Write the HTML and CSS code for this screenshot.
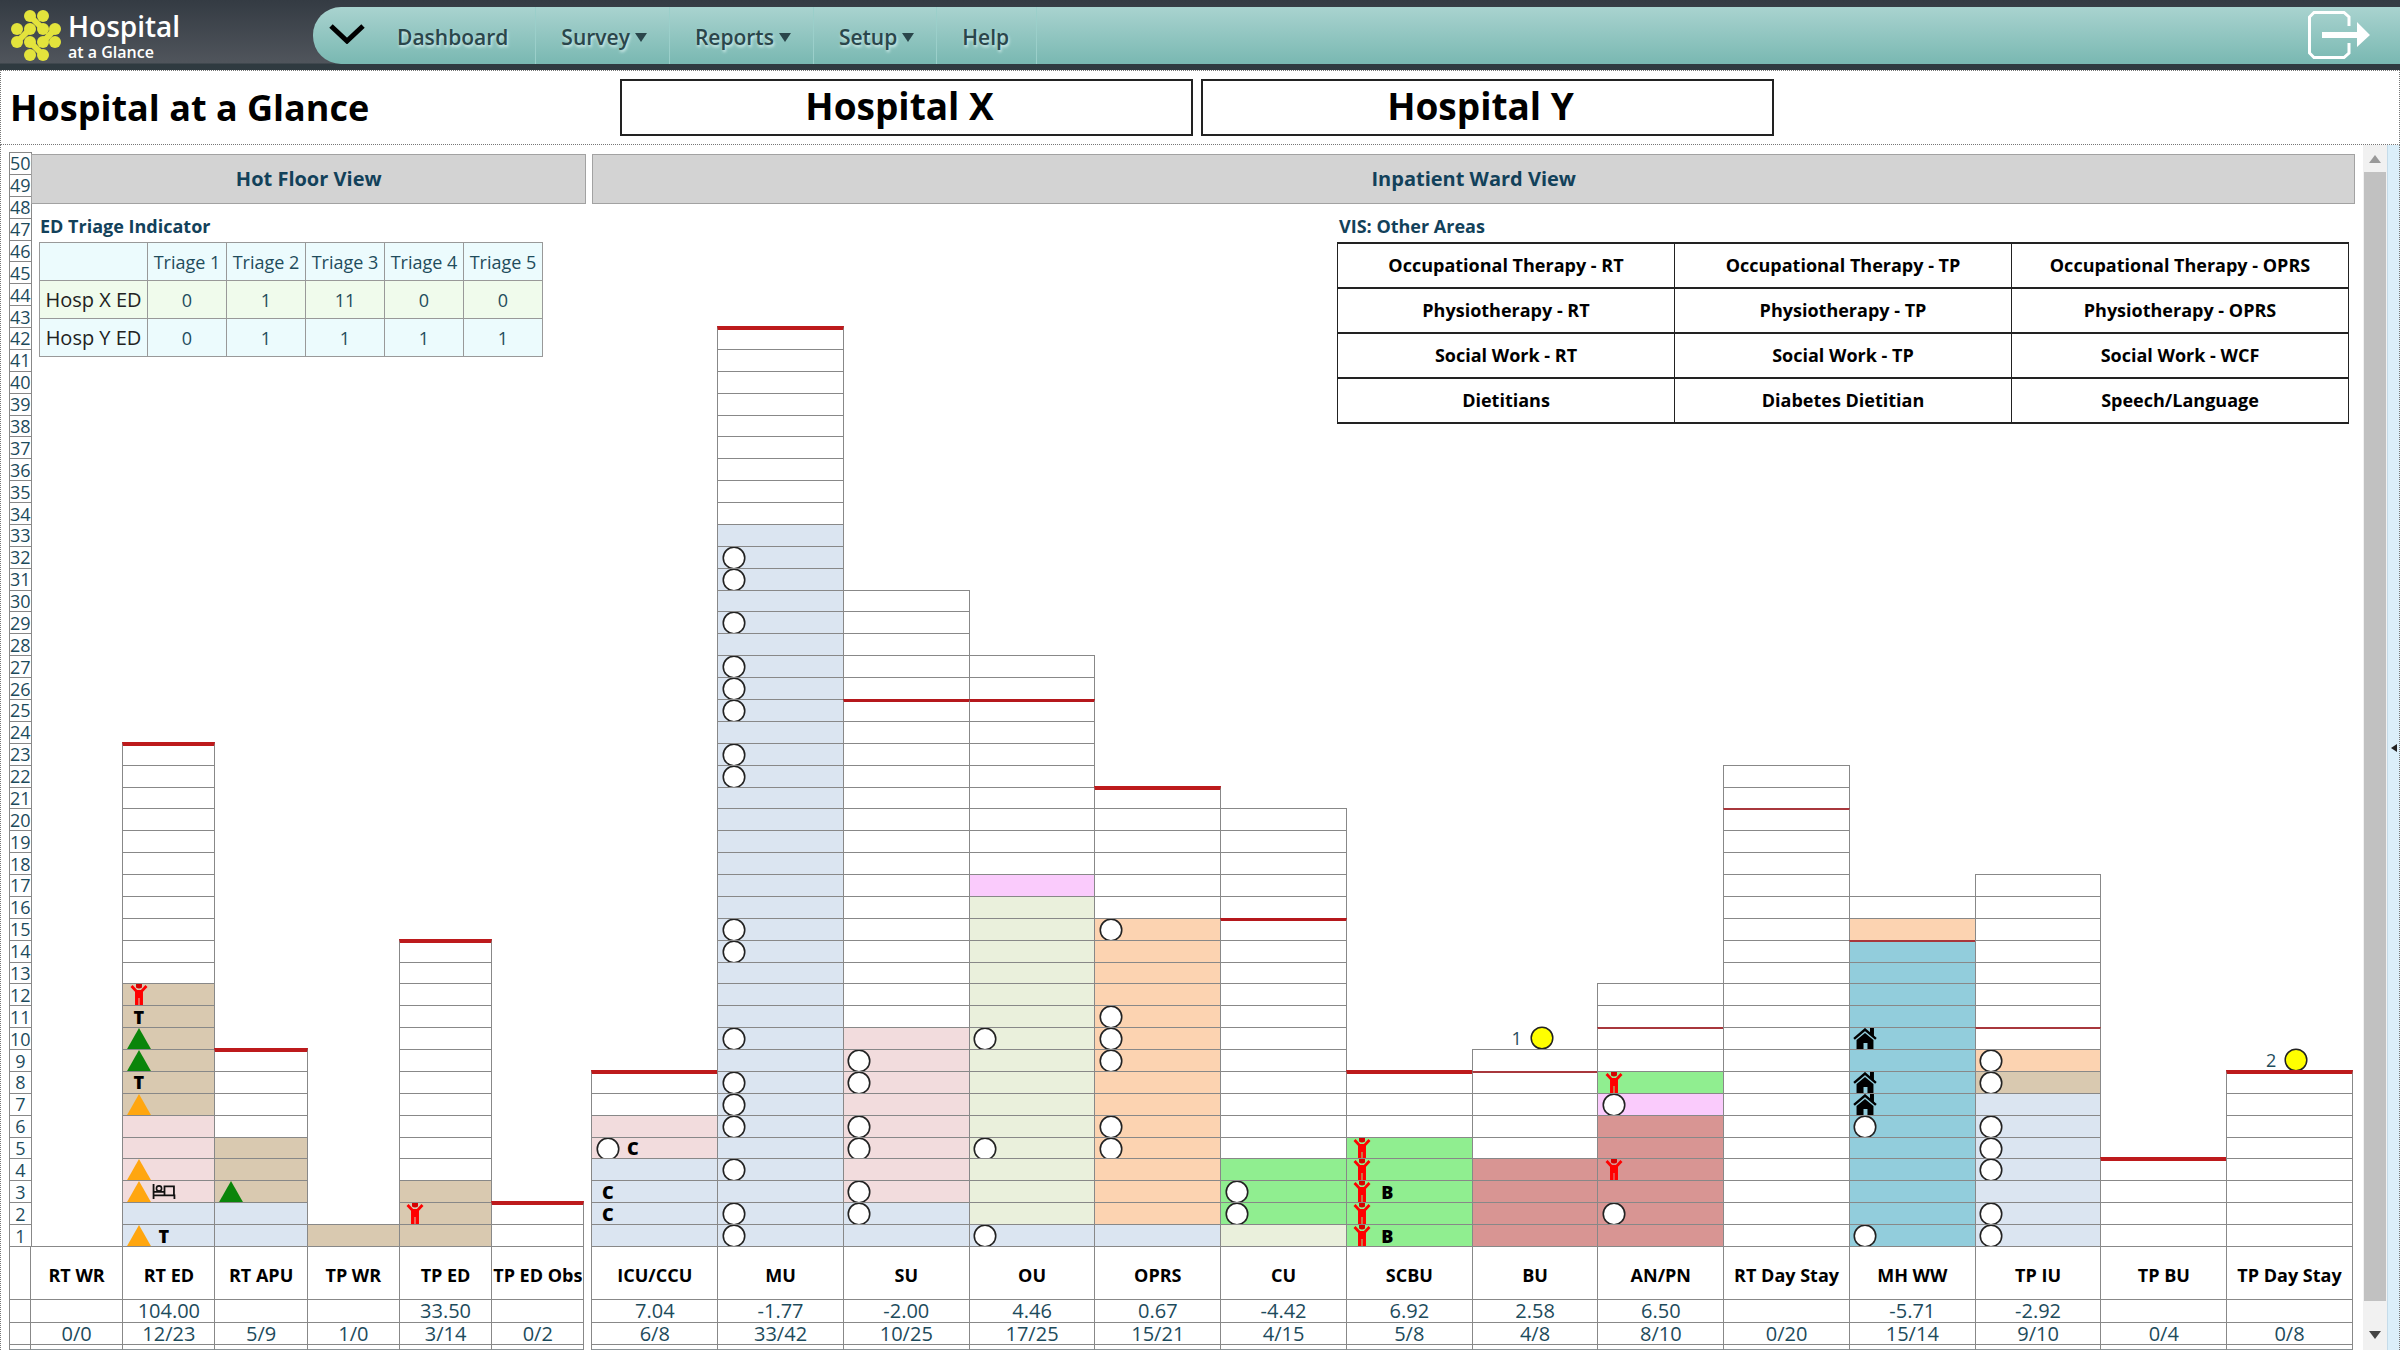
FILE: index.html
```html
<!DOCTYPE html>
<html lang="en">
<head>
    <meta charset="UTF-8">
    <title>Hospital at a Glance</title>
    <link rel="stylesheet" href="styles.css">
</head>
<body>

    <!-- icons used in the bed cells -->
    <svg class="defs" aria-hidden="true">
        <symbol id="circle" viewBox="0 0 24 21"><circle cx="12" cy="11" r="10.8" fill="#fff" stroke="#222" stroke-width="1.6"/></symbol>
        <symbol id="yellow" viewBox="0 0 24 24"><circle cx="12" cy="12" r="10.8" fill="#ff0" stroke="#222" stroke-width="1.5"/></symbol>
        <symbol id="green" viewBox="0 0 24 21"><path d="M12 0L24 21H0z" fill="#0a850a"/></symbol>
        <symbol id="amber" viewBox="0 0 24 21"><path d="M12 0L24 21H0z" fill="#ffa60f"/></symbol>
        <symbol id="person" viewBox="0 0 24 21">
            <path d="M4.500 2L9.500 7.500H14.500L19.500 2" fill="none" stroke="#f00" stroke-width="2.800"/>
            <path d="M9 0h6v3.500q-3 2-6 0z" fill="#d60000"/>
            <path d="M8 6h8v15h-3.500v-7h-1v7H8z" fill="#f00"/>
        </symbol>
        <symbol id="house" viewBox="0 0 24 21">
            <path d="M17 0h4v9l-4-3z"/>
            <path d="M1 11L12 1.500L23 11" fill="none" stroke="#000" stroke-width="2.400"/>
            <path d="M3.500 12L12 5l8.500 7v9h-6v-6h-4v6h-7z"/>
        </symbol>
        <symbol id="bed" viewBox="0 0 24 21">
            <path d="M1.500 3v15M1.500 14.500h21V18M22 14V5.500H12.500V14M2 11h10" fill="none" stroke="#111" stroke-width="1.800"/>
            <circle cx="7" cy="7.500" r="2.600" fill="none" stroke="#111" stroke-width="1.600"/>
        </symbol>
    </svg>

    <header class="topbar">
        <a class="logo" href="#">
            <svg viewBox="0 0 50 52" width="50" height="52" aria-hidden="true">
                <g fill="#e3e33c">
                    <circle cx="19" cy="6" r="6"/><circle cx="32" cy="6" r="6"/>
                    <circle cx="6" cy="19" r="6"/><circle cx="19" cy="19" r="6"/><circle cx="32" cy="19" r="6"/><circle cx="44" cy="19" r="6"/>
                    <circle cx="6" cy="32" r="6"/><circle cx="19" cy="32" r="6"/><circle cx="32" cy="32" r="6"/><circle cx="44" cy="32" r="6"/>
                    <circle cx="19" cy="45" r="6"/><circle cx="32" cy="45" r="6"/>
                </g>
                <path d="M19 6L32 19M19 19L6 32M44 19L32 32M19 32L32 45" stroke="#e3e33c" stroke-width="6"/>
            </svg>
            <span class="logo-text"><span class="logo-name">Hospital</span><span class="logo-sub">at a Glance</span></span>
        </a>
        <nav class="menu">
            <button class="toggle" aria-label="Collapse menu">
                <svg viewBox="0 0 36 20" width="36" height="20"><path d="M2 2L18 17L34 2" fill="none" stroke="#000" stroke-width="5"/></svg>
            </button>
            <a href="#">Dashboard</a>
            <a href="#">Survey<span class="arrow"></span></a>
            <a href="#">Reports<span class="arrow"></span></a>
            <a href="#">Setup<span class="arrow"></span></a>
            <a href="#">Help</a>
            <button class="exit" aria-label="Log out">
                <svg viewBox="0 0 62 48" width="62" height="48">
                    <path d="M41 15V6L36 1.500H6L1.500 6V42L6 46.500H36L41 42V32" fill="none" stroke="#fff" stroke-width="3"/>
                    <path d="M14 21H49V11L62 24L49 36V27H14z" fill="#fff"/>
                </svg>
            </button>
        </nav>
    </header>

    <div class="titlebar">
        <h1>Hospital at a Glance</h1>
        <button class="site">Hospital X</button>
        <button class="site">Hospital Y</button>
    </div>

    <main>
        <div class="panel">
            <div class="scale" id="scale"></div>

            <section class="view">
                <div class="view-top">
                    <h2>Hot Floor View</h2>
                    <h3>ED Triage Indicator</h3>
                    <table class="triage">
                        <tr><th></th><th>Triage 1</th><th>Triage 2</th><th>Triage 3</th><th>Triage 4</th><th>Triage 5</th></tr>
                        <tr class="odd"><td class="site-name">Hosp X ED</td><td>0</td><td>1</td><td>11</td><td>0</td><td>0</td></tr>
                        <tr><td class="site-name">Hosp Y ED</td><td>0</td><td>1</td><td>1</td><td>1</td><td>1</td></tr>
                    </table>
                </div>
                <div class="wards" id="hot-floor"></div>
            </section>

            <section class="view">
                <div class="view-top">
                    <h2>Inpatient Ward View</h2>
                    <div class="areas">
                        <h3>VIS: Other Areas</h3>
                        <table>
                            <tr><td>Occupational Therapy - RT</td><td>Occupational Therapy - TP</td><td>Occupational Therapy - OPRS</td></tr>
                            <tr><td>Physiotherapy - RT</td><td>Physiotherapy - TP</td><td>Physiotherapy - OPRS</td></tr>
                            <tr><td>Social Work - RT</td><td>Social Work - TP</td><td>Social Work - WCF</td></tr>
                            <tr><td>Dietitians</td><td>Diabetes Dietitian</td><td>Speech/Language</td></tr>
                        </table>
                    </div>
                </div>
                <div class="wards" id="inpatient"></div>
            </section>
        </div>

        <div class="scrollbar"><span class="up"></span><span class="thumb"></span><span class="down"></span></div>
        <div class="splitter"><span></span></div>
    </main>

    <script src="script.js"></script>
</body>
</html>
```

FILE: styles.css
```css
* {
    box-sizing: border-box;
}

body {
    margin: 0;
    height: 100vh;
    display: flex;
    flex-direction: column;
    overflow: hidden;
    background: #fff;
    color: #000;
    font-family: "Open Sans", "Noto Sans", sans-serif;
    font-size: 18px;
}

h1, h2, h3 {
    margin: 0;
}

button {
    font-family: inherit;
    background: none;
    border: none;
    padding: 0;
    cursor: pointer;
}

.defs {
    display: none;
}

/* Top bar */
.topbar {
    display: flex;
    height: 70px;
    padding: 7px 0 6px 11px;
    background: linear-gradient(#343b43, #50555c 63px, #2f3a40 64px);
}

.logo {
    display: flex;
    align-items: center;
    gap: 7px;
    width: 302px;
    color: #fff;
    text-decoration: none;
}

.logo-text {
    display: flex;
    flex-direction: column;
    font-weight: 600;
}

.logo-name {
    font-size: 28px;
    line-height: 32px;
}

.logo-sub {
    font-size: 16px;
    line-height: 20px;
}

.menu {
    display: flex;
    flex: 1;
    align-items: stretch;
    border-radius: 28px 0 0 28px;
    background: linear-gradient(#a9d3cf, #79b8b2);
}

.toggle {
    padding: 0 7px 0 16px;
}

.menu a {
    display: flex;
    align-items: center;
    gap: 5px;
    padding: 3px 27px 0 25px;
    border-right: 1px solid #9bcfca;
    color: #2a464b;
    font-size: 21px;
    font-weight: 600;
    text-decoration: none;
    text-shadow: 1px 2px 3px #d8f0ee;
}

.arrow {
    border: 6px solid transparent;
    border-top: 9px solid #2a464b;
    border-bottom: 0;
}

.menu a:has(.arrow) {
    padding-right: 22px;
}

.exit {
    margin-left: auto;
    margin-right: 30px;
    padding-top: 2px;
}

/* Title row */
.titlebar {
    display: flex;
    align-items: center;
    height: 75px;
    padding: 0 10px 0 9px;
    gap: 8px;
    border: 1px dotted #777;
}

.titlebar h1 {
    width: 602px;
    font-size: 36px;
    font-weight: 700;
}

.site {
    width: 573px;
    height: 57px;
    padding: 0 14px 4px 0;
    border: 2px solid #222;
    background: #fff;
    font-size: 37px;
    line-height: 40px;
    font-weight: 700;
}

/* Chart */
main {
    flex: 1;
    display: flex;
    min-height: 0;
    border-left: 1px dotted #777;
}

.panel {
    flex: 1;
    display: grid;
    grid-template: minmax(0, 1fr) / 22px 239fr 761fr;
    padding: 7px 8px 0 8px;
}

.view {
    display: grid;
    grid-template: minmax(0, 1fr) / 1fr;
}

.view + .view {
    margin-left: 6px;
}

.view-top, .wards {
    grid-area: 1 / 1;
}

.view-top {
    padding-top: 2px;
    color: #12415a;
}

h2 {
    height: 50px;
    border: 1px solid #a2a2a2;
    background: #d3d3d3;
    font-size: 20px;
    line-height: 48px;
    font-weight: 700;
    text-align: center;
}

h3 {
    height: 38px;
    font-size: 18px;
    line-height: 44px;
    font-weight: 700;
}

.view-top > h3 {
    padding-left: 9px;
}

table {
    border-collapse: collapse;
    text-align: center;
}

.triage {
    margin-left: 8px;
    background: #ecfbfd;
    color: #1f4c5c;
    font-size: 18px;
}

.triage th, .triage td {
    width: 79px;
    height: 38px;
    padding: 0;
    border: 1px solid #999;
    font-weight: 400;
}

.triage th:first-child, .triage .site-name {
    width: 108px;
}

.triage .site-name {
    color: #222;
    font-size: 20px;
}

.triage .odd {
    background: #f0fbec;
}

.areas {
    width: 1012px;
    margin: 0 6px 0 auto;
}

.areas h3 {
    padding-left: 2px;
}

.areas table {
    width: 100%;
    table-layout: fixed;
    color: #000;
    font-weight: 700;
}

.areas td {
    height: 45px;
    padding: 0 0 2px;
    border: 2px solid #222;
    border-width: 2px 1px;
}

.wards {
    display: flex;
    min-height: 0;
    margin: 0 3px 0 -1px;
}

.ward {
    flex: 1;
    min-width: 0;
    display: flex;
    flex-direction: column;
}

.beds, .levels {
    flex: 1;
    min-height: 0;
    display: grid;
    grid-template-rows: repeat(50, minmax(0, 1fr));
}

.bed {
    display: flex;
    min-height: 0;
    margin-right: -1px;
    padding-left: 3px;
    border: 1px solid #888;
    border-bottom: 0;
}

.bed.limit {
    border-top: 2px solid #a8373c;
}

.bed.limit.heavy {
    border-top: 3px solid #b5181c;
}

.bed.limit.top {
    border-top: 4px solid #bd1a1c;
    margin-top: -1px;
}

.blue { background: #dbe5f1; }
.pink { background: #f2dcdd; }
.tan { background: #d9c9b0; }
.sage { background: #eaf0dc; }
.orange { background: #fcd3b1; }
.violet { background: #facbfc; }
.lime { background: #90ee90; }
.rose { background: #d89593; }
.teal { background: #92cddc; }

.icon {
    width: 25px;
    min-height: 0;
    display: flex;
    justify-content: center;
    align-items: center;
    font-size: 18px;
    line-height: 20px;
    font-weight: 800;
}

.icon svg {
    width: 24px;
    height: 100%;
}

/* patients waiting above the column */
.extra {
    display: flex;
    justify-content: center;
    align-items: center;
    gap: 8px;
    min-height: 0;
    padding-right: 4px;
    color: #1f4c5c;
}

.extra svg {
    width: 24px;
    height: 24px;
}

.foot {
    color: #1d4b5c;
    font-size: 20px;
    line-height: 22px;
    text-align: center;
}

.foot div {
    height: 22px;
    margin-right: -1px;
    border: 1px solid #888;
    border-bottom: 0;
}

.foot .name {
    height: 53px;
    color: #000;
    font-size: 18px;
    line-height: 56px;
    font-weight: 700;
    white-space: nowrap;
}

.foot .delta {
    height: 23px;
}

.foot .tail {
    height: 6px;
    background: linear-gradient(transparent 4px, #8a9296 4px);
}

.scale {
    display: flex;
    flex-direction: column;
    min-height: 0;
    margin-right: 1px;
    color: #1d4b5c;
    font-size: 18px;
    text-align: center;
}

.levels span {
    display: flex;
    align-items: center;
    justify-content: center;
    margin-right: -1px;
    border: 1px solid #888;
    border-bottom: 0;
    line-height: 18px;
}

/* Scrollbar and splitter */
.scrollbar {
    display: flex;
    flex-direction: column;
    align-items: center;
    width: 24px;
    padding: 10px 0 11px;
    background: #f1f1f1;
}

.up, .down {
    border: 6px solid transparent;
}

.up {
    border-top: 0;
    border-bottom: 8px solid #999;
}

.down {
    border-bottom: 0;
    border-top: 8px solid #444;
}

.thumb {
    flex: 1;
    width: 22px;
    margin: 9px 0 30px;
    background: #c1c1c1;
}

.splitter {
    display: flex;
    align-items: center;
    justify-content: flex-end;
    width: 13px;
    padding-right: 2px;
    border-left: 1px solid #c5dcea;
    border-right: 1px dotted #777;
    background: #dbeffa;
}

.splitter span {
    border: 4px solid transparent;
    border-right: 6px solid #222;
    border-left: 0;
}
```

FILE: script.js
```js
const ROWS = 50;

// fill: [colour, beds] from the bottom up; icons: row -> icons in that bed
const hotFloor = [
    { name: "RT WR", beds: 0, count: "0/0" },
    { name: "RT ED", beds: 23, limit: 23, fill: [["blue", 2], ["pink", 4], ["tan", 6]], delta: "104.00", count: "12/23",
      icons: { 1: ["amber", "T"], 3: ["amber", "bed"], 4: ["amber"], 7: ["amber"], 8: ["T"], 9: ["green"], 10: ["green"], 11: ["T"], 12: ["person"] } },
    { name: "RT APU", beds: 9, limit: 9, fill: [["blue", 2], ["tan", 3]], count: "5/9", icons: { 3: ["green"] } },
    { name: "TP WR", beds: 1, fill: [["tan", 1]], count: "1/0" },
    { name: "TP ED", beds: 14, limit: 14, fill: [["tan", 3]], delta: "33.50", count: "3/14", icons: { 2: ["person"] } },
    { name: "TP ED Obs", beds: 2, limit: 2, count: "0/2" }
];

const inpatient = [
    { name: "ICU/CCU", beds: 8, limit: 8, fill: [["blue", 4], ["pink", 2]], delta: "7.04", count: "6/8",
      icons: { 2: ["C"], 3: ["C"], 5: ["circle", "C"] } },
    { name: "MU", beds: 42, limit: 42, fill: [["blue", 33]], delta: "-1.77", count: "33/42",
      circles: [1, 2, 4, 6, 7, 8, 10, 14, 15, 22, 23, 25, 26, 27, 29, 31, 32] },
    { name: "SU", beds: 30, limit: 25, heavy: true, fill: [["blue", 2], ["pink", 8]], delta: "-2.00", count: "10/25", circles: [2, 3, 5, 6, 8, 9] },
    { name: "OU", beds: 27, limit: 25, heavy: true, fill: [["blue", 1], ["sage", 15], ["violet", 1]], delta: "4.46", count: "17/25", circles: [1, 5, 10] },
    { name: "OPRS", beds: 21, limit: 21, fill: [["blue", 1], ["orange", 14]], delta: "0.67", count: "15/21", circles: [5, 6, 9, 10, 11, 15] },
    { name: "CU", beds: 20, limit: 15, heavy: true, fill: [["sage", 1], ["lime", 3]], delta: "-4.42", count: "4/15", circles: [2, 3] },
    { name: "SCBU", beds: 8, limit: 8, fill: [["lime", 5]], delta: "6.92", count: "5/8",
      icons: { 1: ["person", "B"], 2: ["person"], 3: ["person", "B"], 4: ["person"], 5: ["person"] } },
    { name: "BU", beds: 9, limit: 8, fill: [["rose", 4]], delta: "2.58", count: "4/8", extra: 1 },
    { name: "AN/PN", beds: 12, limit: 10, fill: [["rose", 6], ["violet", 1], ["lime", 1]], delta: "6.50", count: "8/10",
      icons: { 2: ["circle"], 4: ["person"], 7: ["circle"], 8: ["person"] } },
    { name: "RT Day Stay", beds: 22, limit: 20, count: "0/20" },
    { name: "MH WW", beds: 16, limit: 14, fill: [["teal", 14], ["orange", 1]], delta: "-5.71", count: "15/14",
      icons: { 1: ["circle"], 6: ["circle"], 7: ["house"], 8: ["house"], 10: ["house"] } },
    { name: "TP IU", beds: 17, limit: 10, fill: [["blue", 7], ["tan", 1], ["orange", 1]], delta: "-2.92", count: "9/10",
      circles: [1, 2, 4, 5, 6, 8, 9] },
    { name: "TP BU", beds: 4, limit: 4, count: "0/4" },
    { name: "TP Day Stay", beds: 8, limit: 8, count: "0/8", extra: 2 }
];

function svg(id) {
    return `<svg aria-hidden="true"><use href="#${id}"/></svg>`;
}

function icon(id) {
    return `<span class="icon">${id.length > 1 ? svg(id) : id}</span>`;
}

function foot(name, delta, count) {
    return `<div class="foot"><div class="name">${name}</div><div class="delta">${delta}</div><div>${count}</div><div class="tail"></div></div>`;
}

function ward(w) {
    const colours = (w.fill || []).flatMap(([colour, n]) => Array(n).fill(colour));
    let html = "";
    if (w.extra) {
        html += `<div class="extra" style="grid-row: ${ROWS - w.beds}">${w.extra}${svg("yellow")}</div>`;
    }
    for (let row = w.beds; row > 0; row--) {
        let icons = (w.icons && w.icons[row]) || [];
        if (w.circles && w.circles.includes(row)) icons = ["circle"];
        const cls = ["bed", colours[row - 1] || ""];
        if (row === w.limit) cls.push("limit");
        if (row === w.limit && w.heavy) cls.push("heavy");
        if (row === w.beds) cls.push("top");
        html += `<div class="${cls.join(" ")}" style="grid-row: ${ROWS + 1 - row}">${icons.map(icon).join("")}</div>`;
    }
    return `<div class="ward"><div class="beds">${html}</div>${foot(w.name, w.delta || "", w.count)}</div>`;
}

let levels = "";
for (let n = ROWS; n > 0; n--) {
    levels += `<span>${n}</span>`;
}

document.getElementById("scale").innerHTML = `<div class="levels">${levels}</div>` + foot("", "", "");
document.getElementById("hot-floor").innerHTML = hotFloor.map(ward).join("");
document.getElementById("inpatient").innerHTML = inpatient.map(ward).join("");
```
